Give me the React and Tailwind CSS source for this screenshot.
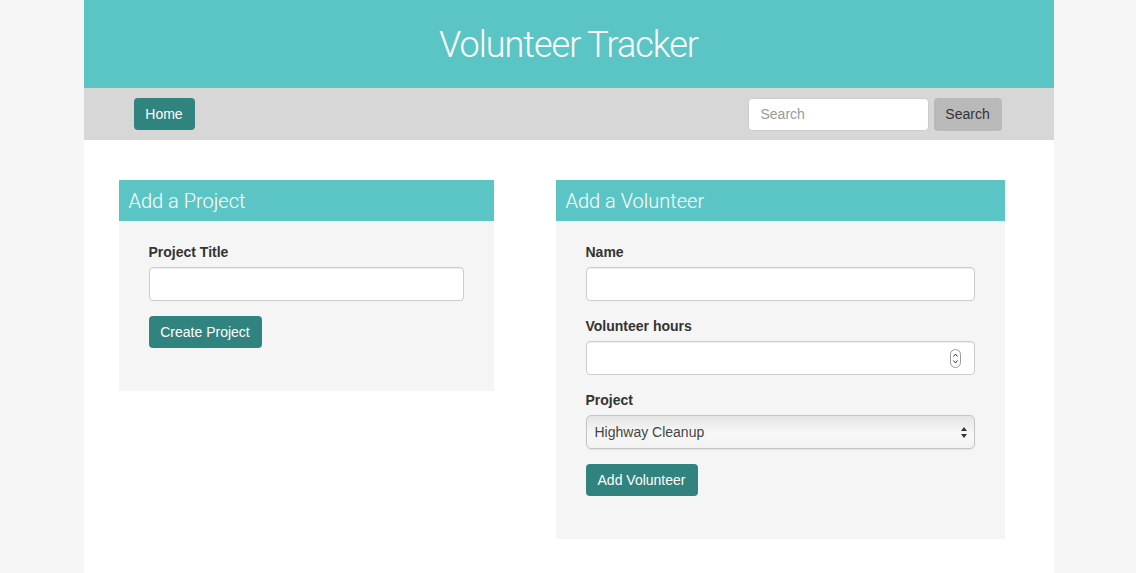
import React from "react";

function Label({ children }) {
  return (
    <label className="block text-[14px] leading-5 font-bold text-[#333] mb-[5px]">
      {children}
    </label>
  );
}

function TextInput() {
  return (
    <div className="h-[34px] w-full rounded-[4px] border border-[#ccc] bg-white shadow-[inset_0_1px_1px_rgba(0,0,0,0.075)]" />
  );
}

const light = { fontFamily: 'Roboto, "Liberation Sans", sans-serif' };

export default function App() {
  return (
    <div
      className="min-h-[573px] bg-[#f6f6f6] pl-[1px]"
      style={{ fontFamily: '"Liberation Sans", Arial, sans-serif' }}
    >
      <div className="mx-auto w-[970px] min-h-[573px] bg-white">
        <header className="h-[88px] bg-[#5bc5c5] flex items-center justify-center">
          <h1 className="text-white text-[36px] font-light leading-none tracking-[-1px] mt-[2px]" style={light}>
            Volunteer Tracker
          </h1>
        </header>
        <nav className="h-[52px] bg-[#d7d7d7] flex items-center justify-between pl-[50px] pr-[52px]">
          <button className="h-[32px] w-[61px] rounded-[4px] bg-[#318380] text-white text-[14px]">
            Home
          </button>
          <div className="flex items-center gap-[5px]">
            <div className="h-[33px] w-[181px] rounded-[4px] border border-[#ccc] bg-white flex items-center px-[12px] text-[14px] text-[#999]">
              Search
            </div>
            <button className="h-[33px] w-[68px] rounded-[4px] bg-[#b9b9b9] text-[14px] text-[#333]">
              Search
            </button>
          </div>
        </nav>
        <main className="flex items-start pt-[40px] pl-[35px] gap-[62px]">
          <section className="w-[375px]">
            <div className="h-[41px] bg-[#5bc5c5] flex items-center pl-[10px]">
              <h2 className="text-white text-[20px] font-light" style={light}>
                Add a Project
              </h2>
            </div>
            <div className="bg-[#f5f5f5] pt-[21px] pb-[43px] px-[30px]">
              <div className="mb-[15px]">
                <Label>Project Title</Label>
                <TextInput />
              </div>
              <button className="h-[32px] w-[113px] rounded-[4px] bg-[#318380] text-white text-[14px]">
                Create Project
              </button>
            </div>
          </section>
          <section className="w-[449px]">
            <div className="h-[41px] bg-[#5bc5c5] flex items-center pl-[10px]">
              <h2 className="text-white text-[20px] font-light" style={light}>
                Add a Volunteer
              </h2>
            </div>
            <div className="bg-[#f5f5f5] pt-[21px] pb-[43px] px-[30px]">
              <div className="mb-[15px]">
                <Label>Name</Label>
                <TextInput />
              </div>
              <div className="mb-[15px]">
                <Label>Volunteer hours</Label>
                <div className="relative">
                  <TextInput />
                  <svg
                    className="absolute right-[14px] top-[8px]"
                    width="11"
                    height="19"
                    viewBox="0 0 11 19"
                  >
                    <rect x="0.5" y="0.5" width="10" height="18" rx="5" fill="white" stroke="#999" />
                    <path d="M3.5 7.5 L5.5 5 L7.5 7.5" fill="none" stroke="#333" strokeWidth="1" />
                    <path d="M3.5 11.5 L5.5 14 L7.5 11.5" fill="none" stroke="#333" strokeWidth="1" />
                  </svg>
                </div>
              </div>
              <div className="mb-[15px]">
                <Label>Project</Label>
                <div className="relative h-[34px] w-full rounded-[5px] border border-[#c4c4c4] bg-[linear-gradient(#e4e4e4,#f8f8f8_55%,#f2f2f2)] flex items-center pl-[8px] text-[14px] text-[#444] shadow-[0_1px_1px_rgba(0,0,0,0.08)]">
                  Highway Cleanup
                  <svg
                    className="absolute right-[6px] top-[10px]"
                    width="8"
                    height="13"
                    viewBox="0 0 8 13"
                  >
                    <path d="M4 1 L7 5 L1 5 Z" fill="#333" />
                    <path d="M4 12 L7 8 L1 8 Z" fill="#333" />
                  </svg>
                </div>
              </div>
              <button className="h-[32px] w-[112px] rounded-[4px] bg-[#318380] text-white text-[14px]">
                Add Volunteer
              </button>
            </div>
          </section>
        </main>
      </div>
    </div>
  );
}
